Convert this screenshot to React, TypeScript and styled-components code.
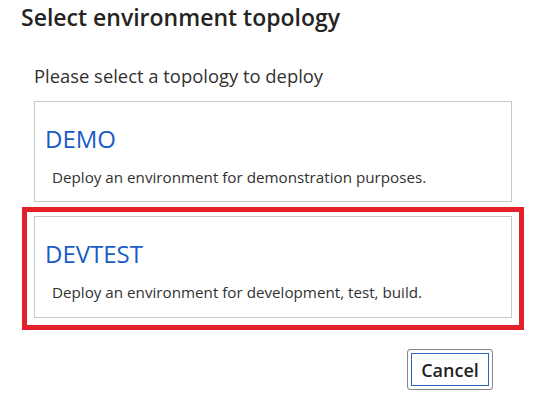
import React from "react";
import styled, { createGlobalStyle } from "styled-components";

const Global = createGlobalStyle`
  html, body { margin: 0; padding: 0; background: #ffffff; }
  body { font-family: "Segoe UI", "Open Sans", "Noto Sans", sans-serif; color: #323130; }
`;

const Page = styled.div`
  width: 552px;
  height: 406px;
  box-sizing: border-box;
  padding: 1px 29px 0 21px;
  display: flex;
  flex-direction: column;
`;

const Title = styled.h2`
  margin: 0;
  font-size: 23px;
  line-height: 32px;
  font-weight: 600;
  color: #252423;
`;

const Body = styled.div`
  display: flex;
  flex-direction: column;
  padding-left: 13px;
  margin-top: 31px;
`;

const Prompt = styled.p`
  margin: 0;
  font-size: 18.4px;
  line-height: 24px;
  color: #323130;
`;

const List = styled.div`
  display: flex;
  flex-direction: column;
  margin-top: 13px;
`;

const Selected = styled.div`
  margin: 5px 0 0 -12px;
  width: 502px;
  box-sizing: border-box;
  border: 5px solid #e4202a;
  padding: 4px 6px 7px 7px;
`;

const Card = styled.div<{ $h: number }>`
  width: 478px;
  height: ${(p) => p.$h}px;
  box-sizing: border-box;
  border: 1px solid #c8c8c8;
  background: #ffffff;
  padding: 21px 10px 0 10px;
  display: flex;
  flex-direction: column;
  cursor: pointer;
`;

const CardTitle = styled.div`
  font-size: 24px;
  line-height: 32px;
  color: #1a5cc6;
`;

const CardDesc = styled.div`
  margin-top: 12px;
  padding-left: 7px;
  font-size: 15.2px;
  line-height: 20px;
  color: #323130;
`;

const Footer = styled.div`
  display: flex;
  justify-content: flex-end;
  margin-top: 19px;
  padding-right: 30px;
`;

const Button = styled.button`
  width: 86px;
  height: 41px;
  box-sizing: border-box;
  border: 1px solid #8a8886;
  border-radius: 3px;
  background: #ffffff;
  box-shadow: inset 0 0 0 3px #ffffff, inset 0 0 0 4px #2b66c4;
  font-family: inherit;
  font-size: 18px;
  font-weight: 600;
  color: #201f1e;
  padding: 0;
  cursor: pointer;
`;

const topologies = [
  { name: "DEMO", desc: "Deploy an environment for demonstration purposes.", selected: false },
  { name: "DEVTEST", desc: "Deploy an environment for development, test, build.", selected: true },
];

export default function App() {
  return (
    <>
      <Global />
      <Page>
        <Title>Select environment topology</Title>
        <Body>
          <Prompt>Please select a topology to deploy</Prompt>
          <List>
            {topologies.map((t) => {
              const card = (
                <Card key={t.name} $h={t.selected ? 102 : 101}>
                  <CardTitle>{t.name}</CardTitle>
                  <CardDesc>{t.desc}</CardDesc>
                </Card>
              );
              return t.selected ? <Selected key={t.name}>{card}</Selected> : card;
            })}
          </List>
          <Footer>
            <Button>Cancel</Button>
          </Footer>
        </Body>
      </Page>
    </>
  );
}
